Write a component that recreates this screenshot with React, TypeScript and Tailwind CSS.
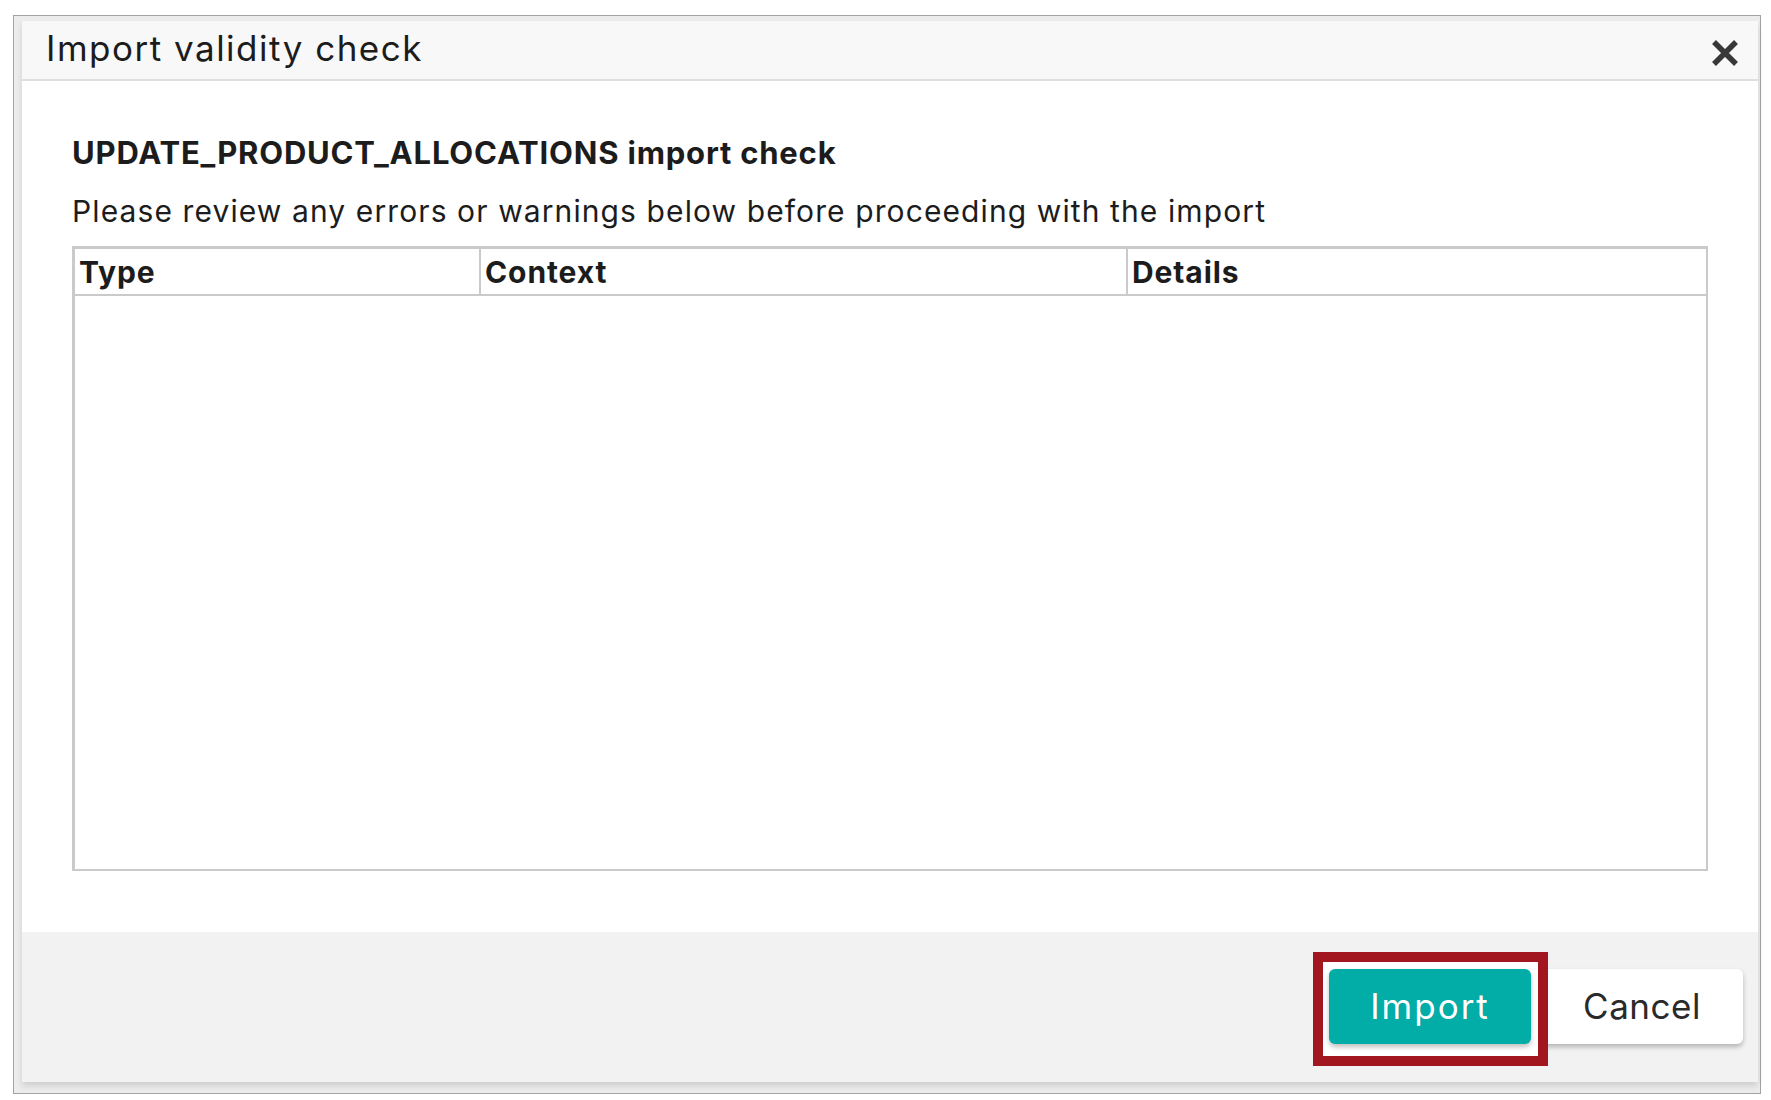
import React from "react";

const font = { fontFamily: "Inter, 'Noto Sans', sans-serif" };

export default function App() {
  return (
    <div className="w-[1771px] h-[1100px] bg-white pl-[13px] pt-[15px] pr-[10px]" style={font}>
      <div className="w-[1748px] h-[1079px] border border-[#a3a3a3] bg-[#ececec] pl-[8px] pt-[5px] pr-[2px] pb-[11px]">
        <div className="flex flex-col h-full bg-white shadow-[0_4px_6px_rgba(0,0,0,0.12)]">
          {/* header */}
          <div className="h-[60px] shrink-0 bg-[#f8f8f8] border-b-2 border-[#dedede] flex items-center justify-between pl-[24px] pr-[18px]">
            <span className="text-[35px] text-[#1c1c1c] tracking-[1.5px] leading-none pb-[4px]">Import validity check</span>
            <svg width="30" height="30" viewBox="0 0 30 30" className="mt-[6px]">
              <path d="M4 4 L26 26 M26 4 L4 26" stroke="#383838" strokeWidth="5.5" strokeLinecap="butt" />
            </svg>
          </div>
          {/* body */}
          <div className="flex-1 bg-white px-[50px] pt-[56px]">
            <div className="text-[31px] font-bold text-[#1c1c1c] leading-none tracking-[0.8px]">UPDATE_PRODUCT_ALLOCATIONS import check</div>
            <div className="mt-[28px] text-[30px] text-[#1c1c1c] leading-none tracking-[1.1px]">Please review any errors or warnings below before proceeding with the import</div>
            <div className="mt-[20px] h-[625px] border-2 border-t-[3px] border-l-[3px] border-[#cacaca] flex flex-col">
              <div className="h-[47px] border-b-2 border-[#cacaca] flex items-center text-[30px] font-bold text-[#1c1c1c] leading-none tracking-[0.9px]">
                <div className="w-[406px] h-full flex items-center pl-[4px] border-r-2 border-[#cacaca]">Type</div>
                <div className="w-[647px] h-full flex items-center pl-[4px] border-r-2 border-[#cacaca]">Context</div>
                <div className="flex-1 h-full flex items-center pl-[4px]">Details</div>
              </div>
              <div className="flex-1" />
            </div>
          </div>
          {/* footer */}
          <div className="h-[150px] shrink-0 bg-[#f2f2f2] flex items-start justify-end pr-[15px] pt-[20px]">
            <div className="relative z-10 border-[10px] border-[#a1161f] bg-white pl-[6px] pr-[7px] pt-[7px] pb-[12px]">
              <button className="w-[202px] h-[75px] rounded-[6px] bg-[#02aca7] text-white text-[35px] leading-none tracking-[2px] shadow-[0_3px_5px_rgba(0,0,0,0.25)]">Import</button>
            </div>
            <button className="relative z-0 ml-[-7px] mt-[17px] w-[202px] h-[75px] rounded-[6px] bg-white text-[#2a2a2a] text-[35px] leading-none tracking-[0.5px] shadow-[0_3px_5px_rgba(0,0,0,0.25)]">Cancel</button>
          </div>
        </div>
      </div>
    </div>
  );
}
